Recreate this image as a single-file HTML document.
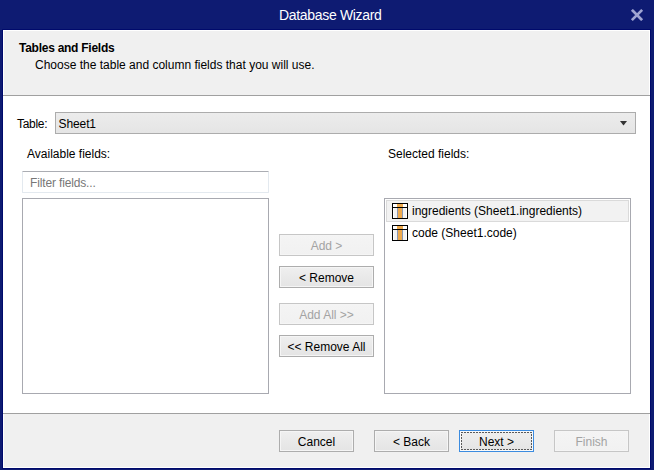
<!DOCTYPE html>
<html><head><meta charset="utf-8">
<style>
*{margin:0;padding:0;box-sizing:border-box}
html,body{width:654px;height:470px;overflow:hidden;background:#0e1b72}
body{position:relative;font-family:"Liberation Sans",sans-serif;font-size:12px;color:#000}
.a{position:absolute}
.t{position:absolute;white-space:pre;line-height:1}
#frame{left:2px;top:29px;width:649px;height:440px;border:1px solid #000a6c;background:#fff}
#inner{left:3px;top:30px;width:647px;height:438px;border:1px solid #fff;background:#fff}
#hdr{left:4px;top:31px;width:645px;height:64px;background:#f0f0f0}
#sep1{left:3px;top:95px;width:647px;height:1px;background:#a0a0a0}
#sep2{left:3px;top:413px;width:647px;height:1px;background:#a0a0a0}
#ftr{left:4px;top:414px;width:645px;height:53px;background:#f0f0f0}
.btn{position:absolute;width:95px;height:22px;border:1px solid #adadad;background:linear-gradient(#efefef,#e4e4e4);box-shadow:inset 0 0 0 1px #f5f5f5;text-align:center;line-height:22px}
.btn.dis{border-color:#c6c6c6;background:linear-gradient(#f4f4f4,#f1f1f1);color:#a3a3a3}
.list{position:absolute;width:247px;height:196px;border:1px solid #a8a9b0;background:#fff}
</style></head><body>
<div class="t" style="left:279px;top:8px;font-size:14px;letter-spacing:-0.32px;color:#fff">Database Wizard</div>
<svg class="a" style="left:630px;top:8px" width="14" height="14" viewBox="0 0 14 14"><path d="M2.8 2.8L11.2 11.2M11.2 2.8L2.8 11.2" stroke="#9fa5d2" stroke-width="2.7" stroke-linecap="square"/></svg>

<div class="a" id="frame"></div>
<div class="a" id="inner"></div>
<div class="a" id="hdr"></div>
<div class="a" id="sep1"></div>
<div class="t" style="left:19px;top:42px;font-weight:bold;font-size:12px;letter-spacing:-0.26px">Tables and Fields</div>
<div class="t" style="left:35px;top:59px">Choose the table and column fields that you will use.</div>

<div class="t" style="left:17px;top:118px;letter-spacing:-0.3px">Table:</div>
<div class="a" style="left:55px;top:112px;width:581px;height:22px;border:1px solid #acacac;background:linear-gradient(#ececec,#e5e5e5)"></div>
<div class="t" style="left:58.5px;top:118px;letter-spacing:-0.1px">Sheet1</div>
<svg class="a" style="left:620px;top:121px" width="7" height="5" viewBox="0 0 7 5"><path d="M0 0H7L3.5 4.5Z" fill="#333"/></svg>

<div class="t" style="left:27px;top:148px">Available fields:</div>
<div class="a" style="left:22px;top:171px;width:247px;height:22px;border:1px solid #e3e9ef;border-top-color:#abadb3;border-radius:1px;background:#fff"></div>
<div class="t" style="left:30px;top:177px;color:#777;letter-spacing:-0.15px">Filter fields...</div>
<div class="list" style="left:22px;top:198px"></div>

<div class="btn dis" style="left:279px;top:234px">Add &gt;</div>
<div class="btn" style="left:279px;top:266px">&lt; Remove</div>
<div class="btn dis" style="left:279px;top:303px">Add All &gt;&gt;</div>
<div class="btn" style="left:279px;top:335px">&lt;&lt; Remove All</div>

<div class="t" style="left:388px;top:148px">Selected fields:</div>
<div class="list" style="left:384px;top:198px"></div>
<div class="a" style="left:386px;top:200px;width:243px;height:22px;border:1px solid #dadada;background:#f2f2f2"></div>
<svg class="a" style="left:392px;top:203px" width="16" height="16" viewBox="0 0 16 16">
<rect x="0.5" y="0.5" width="15" height="15" fill="#fff" stroke="#000"/>
<rect x="2" y="5" width="3" height="10" fill="#f3f3f3"/>
<rect x="11" y="5" width="3" height="10" fill="#f3f3f3"/>
<rect x="5" y="1" width="6" height="3" fill="#eeaa4e"/>
<rect x="6" y="5" width="4" height="10" fill="#eeaa4e"/>
<rect x="5" y="5" width="1" height="10" fill="#8a98b4"/>
<rect x="10" y="5" width="1" height="10" fill="#8a98b4"/>
<rect x="0" y="4" width="16" height="1" fill="#000"/>
</svg>
<div class="t" style="left:412px;top:205px">ingredients (Sheet1.ingredients)</div>
<svg class="a" style="left:392px;top:225px" width="16" height="16" viewBox="0 0 16 16">
<rect x="0.5" y="0.5" width="15" height="15" fill="#fff" stroke="#000"/>
<rect x="2" y="5" width="3" height="10" fill="#f3f3f3"/>
<rect x="11" y="5" width="3" height="10" fill="#f3f3f3"/>
<rect x="5" y="1" width="6" height="3" fill="#eeaa4e"/>
<rect x="6" y="5" width="4" height="10" fill="#eeaa4e"/>
<rect x="5" y="5" width="1" height="10" fill="#8a98b4"/>
<rect x="10" y="5" width="1" height="10" fill="#8a98b4"/>
<rect x="0" y="4" width="16" height="1" fill="#000"/>
</svg>
<div class="t" style="left:412px;top:227px">code (Sheet1.code)</div>

<div class="a" id="sep2"></div>
<div class="a" id="ftr"></div>
<div class="btn" style="left:279px;top:430px;width:75px">Cancel</div>
<div class="btn" style="left:374px;top:430px;width:75px">&lt; Back</div>
<div class="btn" style="left:459px;top:430px;width:75px;border-color:#3c8ce0">Next &gt;</div>
<div class="a" style="left:460px;top:431px;width:73px;height:20px;border:1px solid #fafafa"></div>
<div class="a" style="left:461px;top:432px;width:71px;height:1px;background:repeating-linear-gradient(90deg,#5a5a5a 0 2px,transparent 2px 3px)"></div>
<div class="a" style="left:461px;top:449px;width:71px;height:1px;background:repeating-linear-gradient(90deg,#5a5a5a 0 2px,transparent 2px 3px)"></div>
<div class="a" style="left:461px;top:432px;width:1px;height:18px;background:repeating-linear-gradient(180deg,#5a5a5a 0 1px,transparent 1px 2px,#5a5a5a 2px 3px)"></div>
<div class="a" style="left:531px;top:432px;width:1px;height:18px;background:repeating-linear-gradient(180deg,#5a5a5a 0 1px,transparent 1px 2px,#5a5a5a 2px 3px)"></div>
<div class="btn dis" style="left:554px;top:430px;width:75px">Finish</div>
</body></html>
